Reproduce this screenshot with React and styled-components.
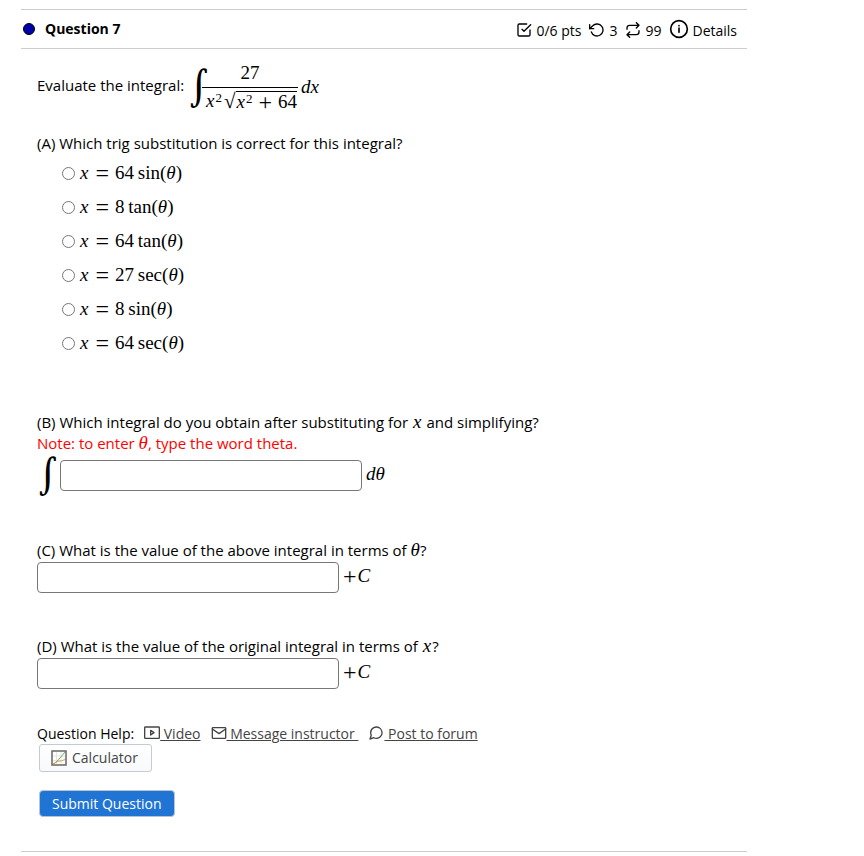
import React, { useState } from 'react'
import styled, { createGlobalStyle } from 'styled-components'

const GlobalStyle = createGlobalStyle`
  body {
    margin: 0;
    background: #fff;
    color: #000;
    font: 15px/21px 'Open Sans', sans-serif;
  }
`

const Question = styled.main`
  max-width: 726px;
  margin: 9px 21px 0;
  border-top: 1px solid #ccc;
  border-bottom: 1px solid #ccc;
`

const Header = styled.header`
  display: flex;
  align-items: center;
  height: 38px;
  padding: 0 10px 0 2px;
  border-bottom: 1px solid #ccc;
`

const Dot = styled.span`
  width: 10px;
  height: 10px;
  margin-right: 10px;
  border: 1px solid #000;
  border-radius: 50%;
  background: #00a;
`

const Title = styled.h1`
  flex: 1;
  margin: 0;
  font-size: 14px;
  line-height: 20px;
  font-weight: 700;
`

const Scores = styled.div`
  display: flex;
  align-items: center;
  gap: 8px;
  padding-top: 3px;
  font-size: 14px;
  line-height: 20px;
`

const Score = styled.span`
  display: flex;
  align-items: center;
  gap: 4px;
`

const Details = styled.button`
  display: flex;
  align-items: center;
  gap: 3px;
  height: 20px;
  padding: 0;
  border: 0;
  background: none;
  color: inherit;
  font: inherit;
`

const IconSvg = styled.svg`
  flex: none;
  width: ${(props) => props.$size}px;
  height: ${(props) => props.$size}px;
  margin-bottom: ${(props) => (props.$size > 16 ? 4 : 2)}px;
  fill: none;
  stroke: currentColor;
  stroke-width: 2;
  stroke-linecap: round;
  stroke-linejoin: round;
`

const Body = styled.div`
  padding: 12px 16px 34px;
`

const MathText = styled.span`
  font-family: 'Liberation Serif', serif;
  font-size: 19px;
  line-height: 20px;
  white-space: nowrap;
`

const Letter = styled.i`
  margin: 0 1px;
`

const Operator = styled.span`
  margin: 0 ${(props) => props.$space}px;
  font-size: 24px;
  line-height: 0;
  vertical-align: -2px;
`

const Prompt = styled.div`
  display: flex;
  align-items: center;
  height: 52px;
  margin-bottom: 20px;
`

const PromptText = styled.span`
  padding-bottom: 4px;
`

const Formula = styled(MathText)`
  display: flex;
  align-items: center;
  margin-left: 4px;
`

const IntegralSign = styled.span`
  flex: none;
  width: ${(props) => props.$width}px;
  font-family: 'DejaVu Math TeX Gyre', 'DejaVu Serif', serif;
  font-size: 36px;
  line-height: 40px;
`

const FractionBox = styled.span`
  display: flex;
  flex-direction: column;
  margin-right: 3px;
  text-align: center;
`

const Numerator = styled.span`
  padding-bottom: 4px;
  border-bottom: 1px solid #000;
`

const Denominator = styled.span`
  display: flex;
  padding: 3px 1px 0 3px;
`

const Radical = styled.span`
  margin-left: 2px;
  font-size: 21px;
`

const Radicand = styled.span`
  height: 20px;
  border-top: 1px solid #000;
`

const Sup = styled.sup`
  font-size: 13px;
  line-height: 0;
  vertical-align: 5px;
`

const Part = styled.section`
  margin-bottom: ${(props) => props.$gap}px;
`

const Text = styled.p`
  margin: 0;
`

const Note = styled(Text)`
  color: #f00;
`

const Options = styled.fieldset`
  margin: 2px 0 0;
  padding: 0 0 0 25px;
  border: 0;
`

const Option = styled.label`
  display: flex;
  align-items: center;
  gap: 4px;
  height: 34px;
`

const Radio = styled.input`
  width: 13px;
  height: 13px;
  margin: 0;
`

const Answer = styled.label`
  display: flex;
  align-items: center;
  gap: 4px;
  margin-top: 1px;
`

const AnswerInput = styled.input`
  box-sizing: border-box;
  width: 302px;
  height: 31px;
  padding: 4px 6px;
  border: 1px solid #777;
  border-radius: 4px;
  font: inherit;
`

const AnswerMath = styled(MathText)`
  padding-bottom: 3px;
`

const Help = styled.div`
  display: flex;
  align-items: center;
  gap: 10px;
  font-size: 14px;
  line-height: 20px;
`

const HelpLink = styled.a`
  display: flex;
  align-items: center;
  color: #444;
  text-decoration: none;
`

const LinkText = styled.span`
  white-space: pre;
  text-decoration: underline;
`

const Calculator = styled.button`
  display: flex;
  align-items: center;
  gap: 5px;
  height: 28px;
  margin: 0 0 18px 2px;
  padding: 0 13px 0 11px;
  border: 1px solid #c3cbd5;
  border-radius: 3px;
  background: linear-gradient(#fff, #f7f9fb);
  color: #444;
  font: 14px/20px 'Open Sans', sans-serif;
`

const Submit = styled.button`
  height: 27px;
  margin-left: 2px;
  padding: 0 12px;
  border: 1px solid #b9c4d0;
  border-radius: 4px;
  background: #1f74d4;
  color: #fff;
  font: 500 14px/20px 'Open Sans', sans-serif;
`

const icons = {
  check: (
    <>
      <path d="M9 11l3 3L22 4" />
      <path d="M21 12v7a2 2 0 0 1-2 2H5a2 2 0 0 1-2-2V5a2 2 0 0 1 2-2h11" />
    </>
  ),
  undo: (
    <>
      <path d="M1 4v6h6" />
      <path d="M3.5 15a9 9 0 1 0 2.1-9.4L1 10" />
    </>
  ),
  repeat: (
    <>
      <path d="M17 1l4 4-4 4M3 11V9a4 4 0 0 1 4-4h14" />
      <path d="M7 23l-4-4 4-4M21 13v2a4 4 0 0 1-4 4H3" />
    </>
  ),
  info: (
    <>
      <circle cx="12" cy="12" r="10" />
      <path d="M12 11v5M12 8h.01" />
    </>
  ),
  video: (
    <>
      <rect x="1" y="3" width="22" height="17" rx="1" />
      <path d="M10 8l5 3.5-5 3.5z" />
    </>
  ),
  mail: (
    <>
      <rect x="2" y="4" width="20" height="16" rx="1" />
      <path d="M2 6l10 7 10-7" />
    </>
  ),
  forum: (
    <path d="M21 11.5a8.4 8.4 0 0 1-.9 3.8 8.5 8.5 0 0 1-7.6 4.7 8.4 8.4 0 0 1-3.8-.9L3 21l1.9-5.7a8.4 8.4 0 0 1-.9-3.8 8.5 8.5 0 0 1 4.7-7.6 8.4 8.4 0 0 1 3.8-.9h.5a8.5 8.5 0 0 1 8 8z" />
  )
}

const Icon = ({ name, size = 16 }) => (
  <IconSvg $size={size} viewBox="0 0 24 24" aria-hidden="true">
    {icons[name]}
  </IconSvg>
)

const GraphIcon = () => (
  <svg width="16" height="16" viewBox="0 0 16 16" aria-hidden="true">
    <rect x="1" y="1" width="14" height="14" fill="#fff" stroke="#666" strokeWidth="1.5" />
    <path d="M5.5 2v12M2 10.5h12M10 2v12M2 6h12" stroke="#e4e4e4" />
    <path d="M2 14C6 12 9 8 14 2" fill="none" stroke="#5b5" />
    <path d="M2 14C5 13 6 11 9 11s3-1 5-2" fill="none" stroke="#e95" />
  </svg>
)

const options = [
  ['64', 'sin'],
  ['8', 'tan'],
  ['64', 'tan'],
  ['27', 'sec'],
  ['8', 'sin'],
  ['64', 'sec']
]

const Squared = () => (
  <>
    <Letter>x</Letter>
    <Sup>2</Sup>
  </>
)

const Integral = () => (
  <Formula>
    <IntegralSign $width={14}>∫</IntegralSign>
    <FractionBox>
      <Numerator>27</Numerator>
      <Denominator>
        <span>
          <Squared />
        </span>
        <Radical>√</Radical>
        <Radicand>
          <Squared />
          <Operator $space={6}>+</Operator>64
        </Radicand>
      </Denominator>
    </FractionBox>
    <i>dx</i>
  </Formula>
)

const Var = ({ children }) => (
  <MathText>
    <i>{children}</i>
  </MathText>
)

const VarX = () => (
  <MathText>
    <Letter>x</Letter>
  </MathText>
)

const PlusC = () => (
  <AnswerMath>
    <Operator $space={0}>+</Operator>
    <Letter>C</Letter>
  </AnswerMath>
)

const App = () => {
  const [selected, setSelected] = useState(null)

  return (
    <>
      <GlobalStyle />
      <Question>
        <Header>
          <Dot />
          <Title>Question 7</Title>
          <Scores>
            <Score>
              <Icon name="check" />
              0/6 pts
            </Score>
            <Score>
              <Icon name="undo" />3
            </Score>
            <Score>
              <Icon name="repeat" />
              99
            </Score>
            <Details type="button">
              <Icon name="info" size={20} />
              Details
            </Details>
          </Scores>
        </Header>

        <Body>
          <Prompt>
            <PromptText>Evaluate the integral:</PromptText>
            <Integral />
          </Prompt>

          <Part $gap={52}>
            <Text id="part-a">(A) Which trig substitution is correct for this integral?</Text>
            <Options aria-labelledby="part-a">
              {options.map(([coefficient, fn], index) => (
                <Option key={coefficient + fn}>
                  <Radio type="radio" name="substitution" checked={selected === index} onChange={() => setSelected(index)} />
                  <MathText>
                    <Letter>x</Letter>
                    <Operator $space={6}>=</Operator>
                    {coefficient}&#8201;{fn}(<i>θ</i>)
                  </MathText>
                </Option>
              ))}
            </Options>
          </Part>

          <Part $gap={45}>
            <Text id="part-b">
              (B) Which integral do you obtain after substituting for <VarX /> and simplifying?
            </Text>
            <Note>
              Note: to enter <Var>θ</Var>, type the word theta.
            </Note>
            <Answer>
              <IntegralSign $width={19}>∫</IntegralSign>
              <AnswerInput type="text" aria-labelledby="part-b" />
              <AnswerMath>
                <i>dθ</i>
              </AnswerMath>
            </Answer>
          </Part>

          <Part $gap={43}>
            <Text id="part-c">
              (C) What is the value of the above integral in terms of <Var>θ</Var>?
            </Text>
            <Answer>
              <AnswerInput type="text" aria-labelledby="part-c" />
              <PlusC />
            </Answer>
          </Part>

          <Part $gap={35}>
            <Text id="part-d">
              (D) What is the value of the original integral in terms of <VarX />?
            </Text>
            <Answer>
              <AnswerInput type="text" aria-labelledby="part-d" />
              <PlusC />
            </Answer>
          </Part>

          <Help>
            <span>Question Help:</span>
            <HelpLink href="#video">
              <Icon name="video" />
              <LinkText> Video</LinkText>
            </HelpLink>
            <HelpLink href="#message">
              <Icon name="mail" />
              <LinkText> Message instructor </LinkText>
            </HelpLink>
            <HelpLink href="#forum">
              <Icon name="forum" />
              <LinkText> Post to forum</LinkText>
            </HelpLink>
          </Help>
          <Calculator type="button">
            <GraphIcon />
            Calculator
          </Calculator>
          <Submit type="button">Submit Question</Submit>
        </Body>
      </Question>
    </>
  )
}

export default App
